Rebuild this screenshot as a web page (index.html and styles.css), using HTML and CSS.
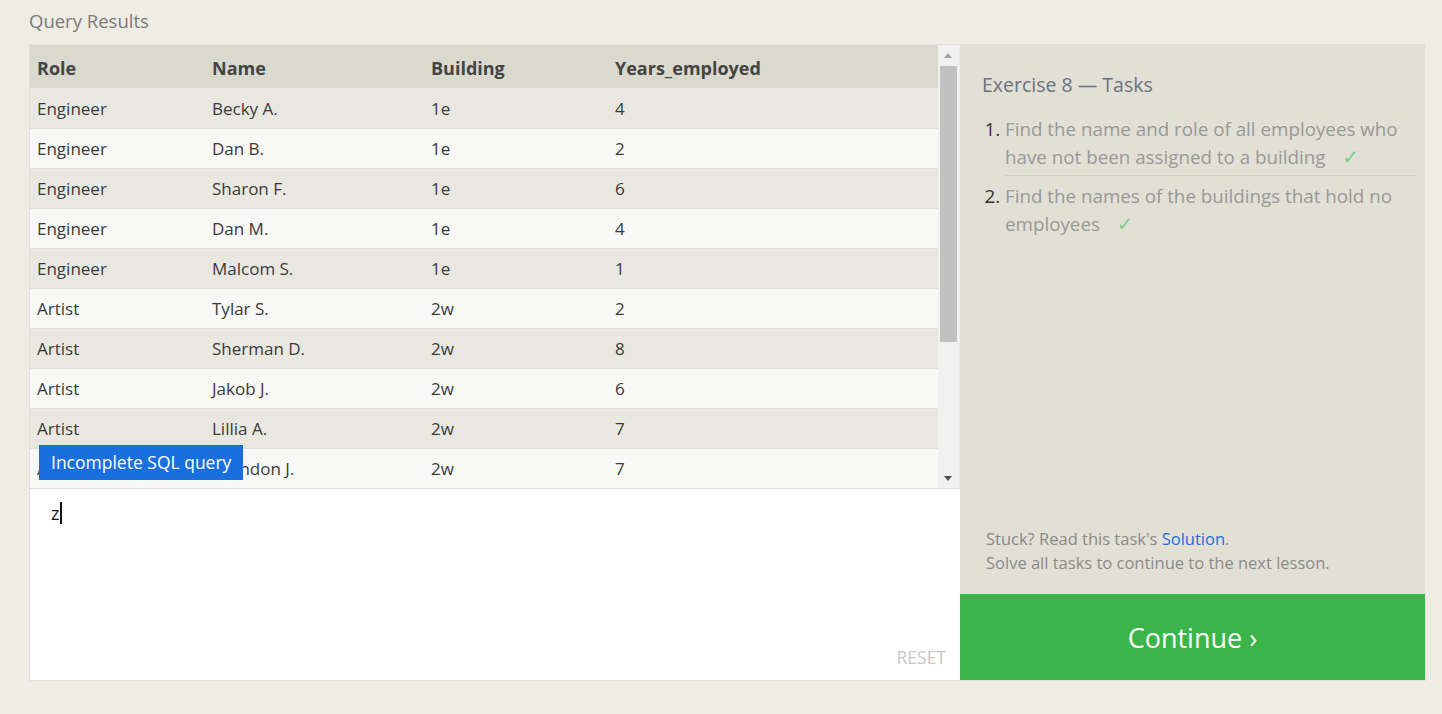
FILE: index.html
```html
<!DOCTYPE html>
<html>
<head>
<meta charset="utf-8">
<link rel="stylesheet" href="styles.css">
</head>
<body>
<div class="page">
  <h2 class="title">Query Results</h2>
  <div class="workspace">
    <div class="left">
      <div class="results">
        <div class="table-wrap">
          <table class="grid">
            <thead>
              <tr><th class="c1">Role</th><th class="c2">Name</th><th class="c3">Building</th><th class="c4">Years_employed</th></tr>
            </thead>
            <tbody>
              <tr><td>Engineer</td><td>Becky A.</td><td>1e</td><td>4</td></tr>
              <tr><td>Engineer</td><td>Dan B.</td><td>1e</td><td>2</td></tr>
              <tr><td>Engineer</td><td>Sharon F.</td><td>1e</td><td>6</td></tr>
              <tr><td>Engineer</td><td>Dan M.</td><td>1e</td><td>4</td></tr>
              <tr><td>Engineer</td><td>Malcom S.</td><td>1e</td><td>1</td></tr>
              <tr><td>Artist</td><td>Tylar S.</td><td>2w</td><td>2</td></tr>
              <tr><td>Artist</td><td>Sherman D.</td><td>2w</td><td>8</td></tr>
              <tr><td>Artist</td><td>Jakob J.</td><td>2w</td><td>6</td></tr>
              <tr><td>Artist</td><td>Lillia A.</td><td>2w</td><td>7</td></tr>
              <tr><td>Artist</td><td>Brandon J.</td><td>2w</td><td>7</td></tr>
            </tbody>
          </table>
        </div>
        <div class="scrollbar">
          <div class="arrow up"></div>
          <div class="track"><div class="thumb"></div></div>
          <div class="arrow down"></div>
        </div>
        <div class="tooltip">Incomplete SQL query</div>
      </div>
      <div class="editor">
        <div class="code">z<span class="caret"></span></div>
        <div class="reset">RESET</div>
      </div>
    </div>
    <div class="right">
      <div class="tasks">
        <h3 class="tasks-title">Exercise 8 — Tasks</h3>
        <ol class="task-list">
          <li class="task">Find the name and role of all employees who have not been assigned to a building <span class="check">✓</span></li>
          <li class="task">Find the names of the buildings that hold no employees <span class="check">✓</span></li>
        </ol>
        <div class="help">
          <div>Stuck? Read this task's <a class="link" href="#">Solution</a>.</div>
          <div>Solve all tasks to continue to the next lesson.</div>
        </div>
      </div>
      <button class="continue">Continue ›</button>
    </div>
  </div>
</div>
</body>
</html>
```

FILE: styles.css
```css
* { box-sizing: border-box; }
html, body { margin: 0; padding: 0; }
body {
  background: #efece4;
  font-family: "Open Sans", "Noto Sans", sans-serif;
  color: #333;
  width: 1442px;
  height: 714px;
  overflow: hidden;
}
.page {
  padding: 9px 0 0 29px;
}
.title {
  margin: 0 0 11px 0;
  font-size: 18.5px;
  line-height: 24px;
  font-weight: 400;
  color: #7a7a7a;
}
.workspace {
  display: flex;
  width: 1397px;
  height: 637px;
  border: 1px solid #e3e0d7;
  border-right: none;
}
.left {
  width: 930px;
  display: flex;
  flex-direction: column;
}
.results {
  position: relative;
  height: 444px;
  display: flex;
  border-bottom: 1px solid #e2e0d9;
}
.table-wrap {
  width: 908px;
  overflow: hidden;
}
.grid {
  width: 908px;
  border-collapse: collapse;
  table-layout: fixed;
}
.grid th {
  background: #dad9cd;
  height: 43px;
  padding: 2px 7px 0;
  text-align: left;
  font-size: 18px;
  font-weight: 700;
  color: #444;
}
.c1 { width: 175px; }
.c2 { width: 219px; }
.c3 { width: 184px; }
.grid td {
  height: 40px;
  padding: 1px 7px 0;
  font-size: 17px;
  color: #3a3a3a;
  border-bottom: 1px solid #e0dfda;
  white-space: nowrap;
}
.grid tbody tr:nth-child(odd) td { background: #e9e8e0; }
.grid tbody tr:nth-child(even) td { background: #f8f8f7; }
.scrollbar {
  width: 21px;
  background: #f1f1f1;
  display: flex;
  flex-direction: column;
  align-items: center;
}
.arrow {
  height: 21px;
  width: 100%;
  position: relative;
}
.arrow.up::after, .arrow.down::after {
  content: "";
  position: absolute;
  left: 6px;
  width: 0; height: 0;
  border-left: 4.5px solid transparent;
  border-right: 4.5px solid transparent;
}
.arrow.up::after {
  top: 8px;
  border-bottom: 5px solid #a3a3a3;
}
.arrow.down::after {
  top: 9px;
  border-top: 5px solid #505050;
}
.track {
  flex: 1;
  width: 100%;
  padding: 0 2px;
}
.thumb {
  background: #c1c1c1;
  height: 276px;
}
.tooltip {
  position: absolute;
  left: 9px;
  top: 400px;
  height: 35px;
  line-height: 35px;
  padding: 0 12px;
  background: #1a6fdf;
  color: #fff;
  font-size: 17.5px;
}
.editor {
  position: relative;
  flex: 1;
  background: #fff;
  padding: 12px 21px;
}
.code {
  font-size: 18px;
  line-height: 24px;
  color: #111;
  display: flex;
  align-items: center;
}
.caret {
  display: inline-block;
  width: 2px;
  height: 22px;
  background: #111;
  margin-left: 1px;
}
.reset {
  position: absolute;
  right: 14px;
  bottom: 11px;
  font-size: 17.5px;
  color: #c8c8c8;
}
.right {
  width: 465px;
  display: flex;
  flex-direction: column;
}
.tasks {
  flex: 1;
  background: #e2dfd4;
  padding: 27px 10px 0 22px;
  display: flex;
  flex-direction: column;
}
.tasks-title {
  margin: 0;
  font-size: 19.5px;
  line-height: 26px;
  font-weight: 400;
  color: #6b7280;
}
.task-list {
  margin: 17px 0 0 0;
  padding: 0 0 0 23px;
  font-size: 18.8px;
  line-height: 28px;
  color: #999;
}
.task {
  padding-bottom: 4px;
}
.task + .task {
  border-top: 1px solid #d2d0c6;
  padding-top: 6px;
}
.task::marker {
  color: #333;
}
.check {
  font-family: "DejaVu Sans", sans-serif;
  font-size: 20px;
  color: #7fd08c;
  margin-left: 12px;
}
.help {
  margin-top: auto;
  padding: 0 0 19px 4px;
  font-size: 16.5px;
  line-height: 24px;
  color: #8a8a8a;
}
.link {
  color: #1a6fdf;
  text-decoration: none;
}
.continue {
  height: 86px;
  border: none;
  background: #3bb54a;
  color: #fff;
  font-family: "Open Sans", "Noto Sans", sans-serif;
  font-size: 27px;
  padding: 0;
  cursor: pointer;
}
```
